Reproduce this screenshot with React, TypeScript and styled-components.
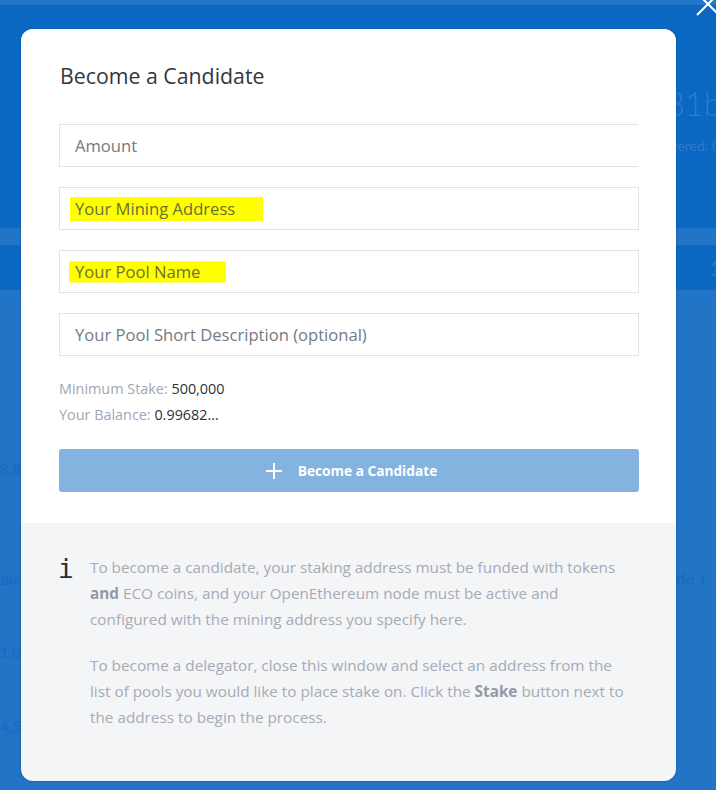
import React from "react";
import styled, { createGlobalStyle } from "styled-components";

const Global = createGlobalStyle`
  html, body { margin: 0; padding: 0; }
  body { font-family: "Open Sans", "Noto Sans", sans-serif; background: #0b68c2; }
  * { box-sizing: border-box; }
`;

const Page = styled.div`
  position: relative;
  width: 716px;
  height: 790px;
  overflow: hidden;
  background: #2174c6;
`;

const TopBand = styled.div`
  height: 5px;
  background: #2476c8;
`;

const Header = styled.div`
  height: 223px;
  background: #0b68c2;
  display: flex;
  flex-direction: column;
  align-items: flex-end;
  padding-top: 78px;
  overflow: hidden;
`;

const Hash = styled.div`
  font-family: Lato, sans-serif;
  font-weight: 300;
  font-size: 33px;
  color: #2d7bcb;
  white-space: nowrap;
  margin-right: -6px;
`;

const HeaderSub = styled.div`
  font-family: Lato, sans-serif;
  font-size: 14px;
  color: #2d7bcb;
  margin-top: 14px;
  margin-right: -4px;
  white-space: nowrap;
`;

const TabStrip = styled.div`
  height: 17px;
  background: #2174c6;
`;

const TabBar = styled.div`
  height: 45px;
  background: #0b68c2;
  display: flex;
  justify-content: flex-end;
  align-items: center;
  overflow: hidden;
`;

const TabNum = styled.span`
  font-family: Lato, sans-serif;
  font-size: 22px;
  color: #2a79c9;
  margin-right: -6px;
`;

const Table = styled.div`
  display: grid;
  grid-template-columns: 21px 1fr 40px;
  padding-top: 170px;
`;

const FaintCell = styled.div<{ $h: number; $end?: boolean }>`
  height: ${(p) => p.$h}px;
  display: flex;
  justify-content: ${(p) => (p.$end ? "flex-end" : "flex-start")};
  font-family: Lato, sans-serif;
  font-size: 15px;
  font-weight: 700;
  color: #1a6cbe;
  white-space: nowrap;
`;

const Close = styled.svg`
  position: absolute;
  left: 696px;
  top: -8px;
`;

const Modal = styled.div`
  position: absolute;
  left: 21px;
  top: 29px;
  width: 655px;
  height: 752px;
  border-radius: 12px;
  overflow: hidden;
  background: #f4f5f7;
  display: flex;
  flex-direction: column;
  box-shadow: 0 0 2px rgba(0, 40, 100, 0.5);
`;

const Body = styled.div`
  background: #fff;
  padding: 35px 37px 31px 38px;
  display: flex;
  flex-direction: column;
`;

const Title = styled.h2`
  margin: 0 0 36px 1px;
  font-size: 21.3px;
  line-height: 24px;
  font-weight: 400;
  color: #333840;
`;

const Fields = styled.div`
  display: flex;
  flex-direction: column;
  gap: 20px;
`;

const Field = styled.div<{ $open?: boolean }>`
  height: 43px;
  border: 1px solid #e2e3ea;
  border-right-color: ${(p) => (p.$open ? "transparent" : "#e2e3ea")};
  display: flex;
  align-items: center;
  padding-left: 15px;
  font-size: 16.6px;
  color: #737a84;
`;

const Mark = styled.span<{ $w: number; $h: number; $dx: number }>`
  position: relative;
  &::before {
    content: "";
    position: absolute;
    left: ${(p) => p.$dx}px;
    top: 50%;
    width: ${(p) => p.$w}px;
    height: ${(p) => p.$h}px;
    transform: translateY(-50%);
    background: #ffff00;
  }
  & > span { position: relative; color: #6b6f3a; }
`;

const Stats = styled.div`
  margin-top: 20px;
  display: flex;
  flex-direction: column;
`;

const Stat = styled.div`
  font-size: 14.4px;
  line-height: 26px;
  color: #a2a6b3;
  & b { font-weight: 400; color: #2c3038; }
`;

const Button = styled.button`
  margin-top: 21px;
  height: 43px;
  border: none;
  border-radius: 3px;
  background: #84b3e0;
  color: #fff;
  font-family: inherit;
  font-size: 13.7px;
  font-weight: 700;
  display: flex;
  align-items: center;
  justify-content: center;
  gap: 15px;
  padding: 0 0 0 4px;
`;

const Footer = styled.div`
  flex: 1;
  padding: 31px 40px 0 37px;
  display: flex;
  gap: 17px;
`;

const InfoIcon = styled.div`
  width: 15px;
  flex: none;
  font-family: "DejaVu Sans Mono", monospace;
  font-size: 26px;
  line-height: 26px;
  margin-top: 2px;
  color: #2a2d33;
`;

const Notes = styled.div`
  display: flex;
  flex-direction: column;
  gap: 20px;
`;

const Note = styled.p`
  margin: 0;
  font-size: 15.3px;
  line-height: 26px;
  color: #a6abb6;
  & b { color: #9499a5; font-weight: 700; }
`;

export default function App() {
  return (
    <>
      <Global />
      <Page>
        <TopBand />
        <Header>
          <Hash>0x2f4e9d0a81b</Hash>
          <HeaderSub>Registered: 0</HeaderSub>
        </Header>
        <TabStrip />
        <TabBar>
          <TabNum>1</TabNum>
        </TabBar>
        <Table>
          <FaintCell $h={110} $end>18,8</FaintCell>
          <FaintCell $h={110} />
          <FaintCell $h={110} />
          <FaintCell $h={73} $end>Stake</FaintCell>
          <FaintCell $h={73} />
          <FaintCell $h={73}>tio&nbsp;&nbsp;(</FaintCell>
          <FaintCell $h={74} $end>21,0</FaintCell>
          <FaintCell $h={74} />
          <FaintCell $h={74} />
          <FaintCell $h={40} $end>14,5</FaintCell>
          <FaintCell $h={40} />
          <FaintCell $h={40} />
        </Table>
        <Close width="24" height="24" viewBox="0 0 24 24">
          <path d="M1 23 L23 1 M1 1 L23 23" stroke="#fff" strokeWidth="2" fill="none" />
        </Close>
        <Modal>
          <Body>
            <Title>Become a Candidate</Title>
            <Fields>
              <Field $open>Amount</Field>
              <Field>
                <Mark $w={193} $h={24} $dx={-5}>
                  <span>Your Mining Address</span>
                </Mark>
              </Field>
              <Field>
                <Mark $w={157} $h={21} $dx={-6}>
                  <span>Your Pool Name</span>
                </Mark>
              </Field>
              <Field>Your Pool Short Description (optional)</Field>
            </Fields>
            <Stats>
              <Stat>
                Minimum Stake: <b>500,000</b>
              </Stat>
              <Stat>
                Your Balance: <b>0.99682...</b>
              </Stat>
            </Stats>
            <Button>
              <svg width="18" height="18" viewBox="0 0 18 18">
                <path d="M9 1 V17 M1 9 H17" stroke="#fff" strokeWidth="2" />
              </svg>
              Become a Candidate
            </Button>
          </Body>
          <Footer>
            <InfoIcon>i</InfoIcon>
            <Notes>
              <Note>
                To become a candidate, your staking address must be funded with tokens{" "}
                <b>and</b> ECO coins, and your OpenEthereum node must be active and
                configured with the mining address you specify here.
              </Note>
              <Note>
                To become a delegator, close this window and select an address from the
                list of pools you would like to place stake on. Click the <b>Stake</b>{" "}
                button next to the address to begin the process.
              </Note>
            </Notes>
          </Footer>
        </Modal>
      </Page>
    </>
  );
}
